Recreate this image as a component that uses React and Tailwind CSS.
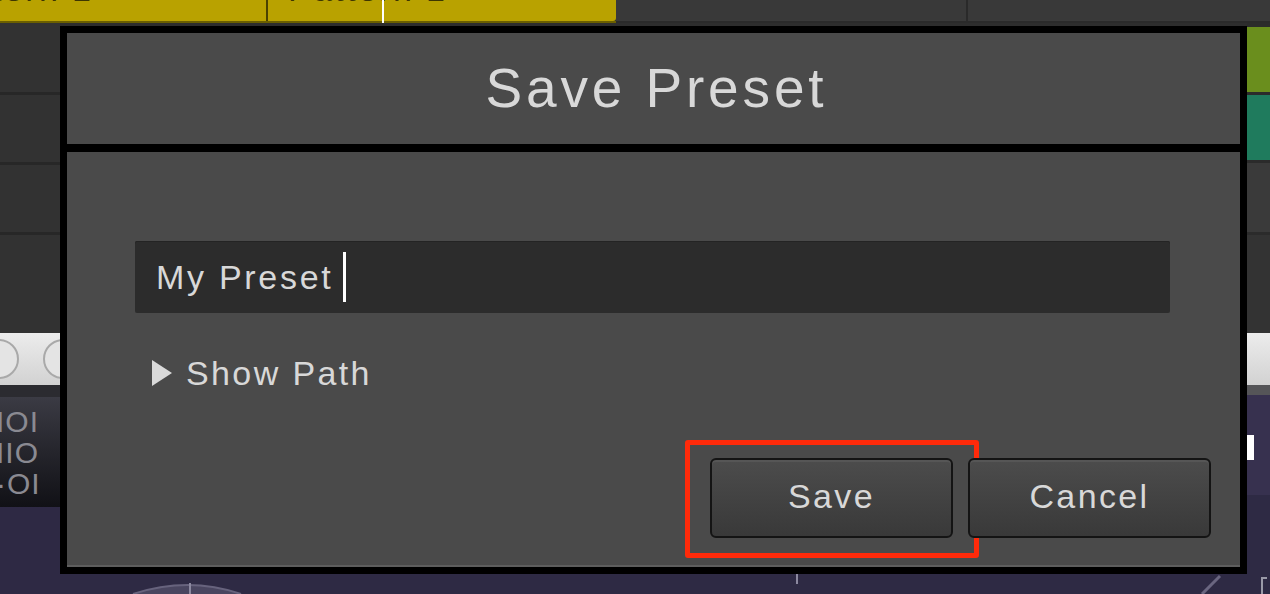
import React from "react";

const font = { fontFamily: '"Liberation Sans", Arial, sans-serif' };

function LeftColumn() {
  return (
    <div className="w-[60px] flex flex-col shrink-0">
      <div className="h-[69px] bg-[#323232]" />
      <div className="h-[3px] bg-[#272727]" />
      <div className="h-[67px] bg-[#323232]" />
      <div className="h-[3px] bg-[#272727]" />
      <div className="h-[67px] bg-[#323232]" />
      <div className="h-[3px] bg-[#272727]" />
      <div className="h-[98px] bg-[#323232]" />
      <div className="h-[52px] bg-gradient-to-b from-[#ececec] to-[#d2d2d2] flex items-center overflow-hidden">
        <div className="w-[40px] h-[40px] rounded-full border-2 border-[#a9a9a9] bg-[#e4e4e4] -ml-[21px] shrink-0" />
        <div className="w-[40px] h-[40px] rounded-full border-2 border-[#a9a9a9] bg-[#e4e4e4] ml-[24px] shrink-0" />
      </div>
      <div className="h-[12px] bg-[#2b2b30]" />
      <div className="h-[110px] bg-gradient-to-b from-[#3b3b44] to-[#111116] overflow-hidden flex flex-col justify-center text-[#8a8a92] text-[30px] leading-[31px] tracking-[1px]">
        <div className="-ml-[4px] whitespace-nowrap">IOI</div>
        <div className="-ml-[4px] whitespace-nowrap">IIO</div>
        <div className="-ml-[4px] whitespace-nowrap">·OI</div>
      </div>
      <div className="flex-1 bg-[#2e2944]" />
    </div>
  );
}

function RightColumn() {
  return (
    <div className="w-[23px] flex flex-col shrink-0">
      <div className="h-[4px] bg-[#2b2b2b]" />
      <div className="h-[65px] bg-[#6a8e1d]" />
      <div className="h-[3px] bg-[#2b2b2b]" />
      <div className="h-[65px] bg-[#1f7b5d]" />
      <div className="h-[3px] bg-[#2b2b2b]" />
      <div className="h-[69px] bg-[#3a3a3a]" />
      <div className="h-[3px] bg-[#2b2b2b]" />
      <div className="h-[98px] bg-[#333333]" />
      <div className="h-[52px] bg-gradient-to-b from-[#ececec] to-[#d2d2d2]" />
      <div className="h-[10px] bg-[#555558]" />
      <div className="h-[100px] bg-[#37314f] flex flex-col">
        <div className="h-[40px]" />
        <div className="w-[7px] h-[25px] bg-white" />
      </div>
      <div className="flex-1 bg-[#2e2a44] relative">
        <div className="absolute left-[14px] top-[82px] w-[6px] h-[20px] border-l-2 border-t-2 border-[#9a9aa8]" />
      </div>
    </div>
  );
}

function MiddleColumn() {
  return (
    <div className="flex-1 flex flex-col">
      <div className="flex-1 bg-[#2d2d2d]" />
      <div className="h-[90px] bg-[#2e2a44] flex items-end">
        <svg width="1187" height="20" viewBox="0 0 1187 20" className="block">
          <path d="M73 20 Q128 2 181 20" fill="#4a4660" stroke="#67637d" strokeWidth="2" />
          <line x1="130" y1="9" x2="130" y2="20" stroke="#8c89a0" strokeWidth="2" />
          <line x1="737" y1="0" x2="737" y2="10" stroke="#8c89a0" strokeWidth="2" />
          <line x1="1160" y1="2" x2="1142" y2="20" stroke="#6a6680" strokeWidth="3" />
        </svg>
      </div>
    </div>
  );
}

function TopStrip() {
  return (
    <div className="h-[23px] flex relative overflow-hidden">
      <div className="w-[616px] flex shrink-0 border-b-2 border-[#6b5f00]">
        <div className="w-[268px] bg-[#b9a200] overflow-hidden relative border-r-2 border-[#4a4200]">
          <div className="-mt-[31px] -ml-[66px] text-[34px] leading-[40px] tracking-[0.07em] text-[#3d3600] whitespace-nowrap">Pattern 1</div>
        </div>
        <div className="flex-1 bg-[#b9a200] overflow-hidden rounded-br-[3px]">
          <div className="-mt-[31px] ml-[20px] text-[34px] leading-[40px] tracking-[0.07em] text-[#3d3600] whitespace-nowrap">Pattern 1</div>
        </div>
      </div>
      <div className="flex-1 bg-[#393939] flex border-b-2 border-[#2a2a2a]">
        <div className="w-[352px] border-r-2 border-[#2a2a2a]" />
      </div>
      <div className="absolute left-[382px] top-0 w-[2px] h-[23px] bg-white" />
    </div>
  );
}

function Button({ label, highlight }) {
  return (
    <div className="relative">
      <button
        className="w-[243px] h-[80px] rounded-[6px] border-2 border-[#141414] bg-gradient-to-b from-[#4c4c4c] to-[#393939] shadow-[inset_0_2px_0_#565656] text-[34px] tracking-[0.07em] text-[#d8d8d8] flex items-center justify-center pb-[3px]"
        style={font}
      >
        {label}
      </button>
      {highlight && (
        <div className="absolute -left-[25px] -right-[26px] -top-[18px] -bottom-[20px] border-[5px] border-[#ff2a0a] rounded-[3px] pointer-events-none" />
      )}
    </div>
  );
}

function Dialog() {
  return (
    <div className="absolute left-[60px] top-[26px] w-[1187px] h-[548px] bg-black p-[7px] flex flex-col gap-[8px]" style={font}>
      <div className="h-[111px] bg-[#4a4a4a] flex items-center justify-center">
        <div className="text-[55px] leading-none tracking-[0.07em] text-[#d8d8d8] ml-[6px]">Save Preset</div>
      </div>
      <div className="flex-1 bg-[#4a4a4a] border-b-2 border-[#5e5e5e] flex flex-col">
        <div className="pt-[89px] pl-[68px] pr-[70px]">
          <div className="h-[72px] bg-[#2c2c2c] rounded-[2px] flex items-center pl-[21px] shadow-[inset_0_1px_0_#242424]">
            <span className="text-[34px] tracking-[0.08em] text-[#d8d8d8]">My Preset</span>
            <span className="w-[3px] h-[50px] bg-white ml-[9px]" />
          </div>
          <div className="mt-[40px] h-[40px] flex items-center pl-[17px]">
            <svg width="20" height="26" viewBox="0 0 20 26" className="block">
              <polygon points="0,0 20,13 0,26" fill="#dadada" />
            </svg>
            <span className="ml-[14px] text-[34px] tracking-[0.07em] text-[#d8d8d8]">Show Path</span>
          </div>
        </div>
        <div className="mt-auto flex justify-end gap-[15px] pr-[29px] pb-[27px]">
          <Button label="Save" highlight />
          <Button label="Cancel" />
        </div>
      </div>
    </div>
  );
}

export default function App() {
  return (
    <div className="w-[1270px] h-[594px] relative overflow-hidden bg-[#2d2d2d] flex flex-col" style={font}>
      <TopStrip />
      <div className="flex-1 flex">
        <LeftColumn />
        <MiddleColumn />
        <RightColumn />
      </div>
      <Dialog />
    </div>
  );
}
